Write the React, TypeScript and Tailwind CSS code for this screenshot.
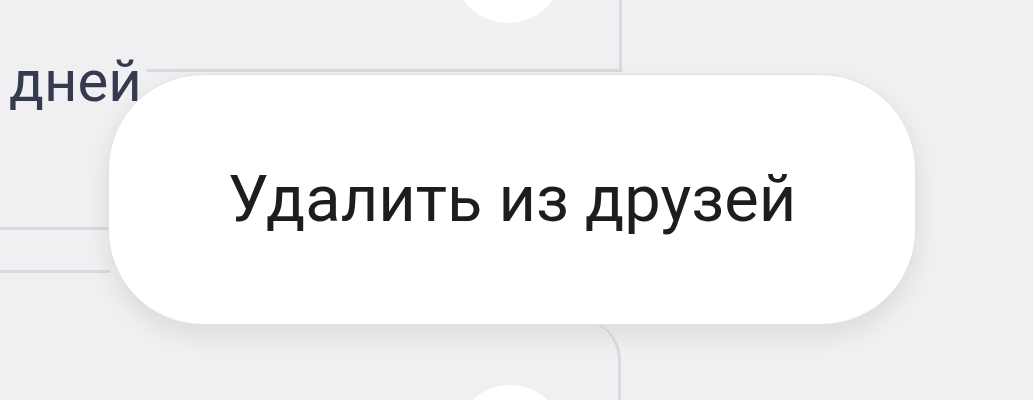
import { ReactNode } from 'react';

const line = 'border-[#dadade]';

function Avatar({ className }: { className: string }) {
  return <div className={`h-[110px] w-[110px] shrink-0 rounded-full bg-white ${className}`} />;
}

function ContextMenu({ children }: { children: ReactNode }) {
  return (
    <div className="absolute left-[108px] top-[74px] flex h-[251px] w-[808px] items-center justify-center rounded-[95px] border border-[#e2e2e5] bg-white shadow-[0_10px_26px_rgba(0,0,0,0.09)]">
      {children}
    </div>
  );
}

export default function App() {
  return (
    <div className="relative h-[400px] w-[1033px] overflow-hidden bg-[#f0f0f2] font-['Roboto',sans-serif]">
      {/* top row of cards */}
      <div className="flex h-[72px]">
        <div className="w-[147px] shrink-0 pl-[9px] pt-[52px]">
          <span className="whitespace-nowrap text-[58px] leading-none text-[#363a4f]">дней</span>
        </div>
        <div className={`flex w-[475px] shrink-0 border-b-[3px] border-r-[3px] pl-[306px] ${line}`}>
          <Avatar className="-mt-[87px]" />
        </div>
        <div className="flex-1" />
      </div>

      {/* middle rows */}
      <div className="flex h-[248px]">
        <div className="flex w-[110px] shrink-0 flex-col">
          <div className="h-[155px]" />
          <div className={`h-[46px] border-y-[3px] ${line}`} />
        </div>
      </div>

      {/* bottom row */}
      <div className="flex h-[80px]">
        <div className={`flex w-[621px] shrink-0 rounded-tr-[40px] border-r-[3px] pl-[455px] pt-[65px] ${line}`}>
          <Avatar className="" />
        </div>
      </div>

      <ContextMenu>
        <span className="whitespace-nowrap text-[65px] leading-none text-[#1d1d1f]">Удалить из друзей</span>
      </ContextMenu>
    </div>
  );
}
